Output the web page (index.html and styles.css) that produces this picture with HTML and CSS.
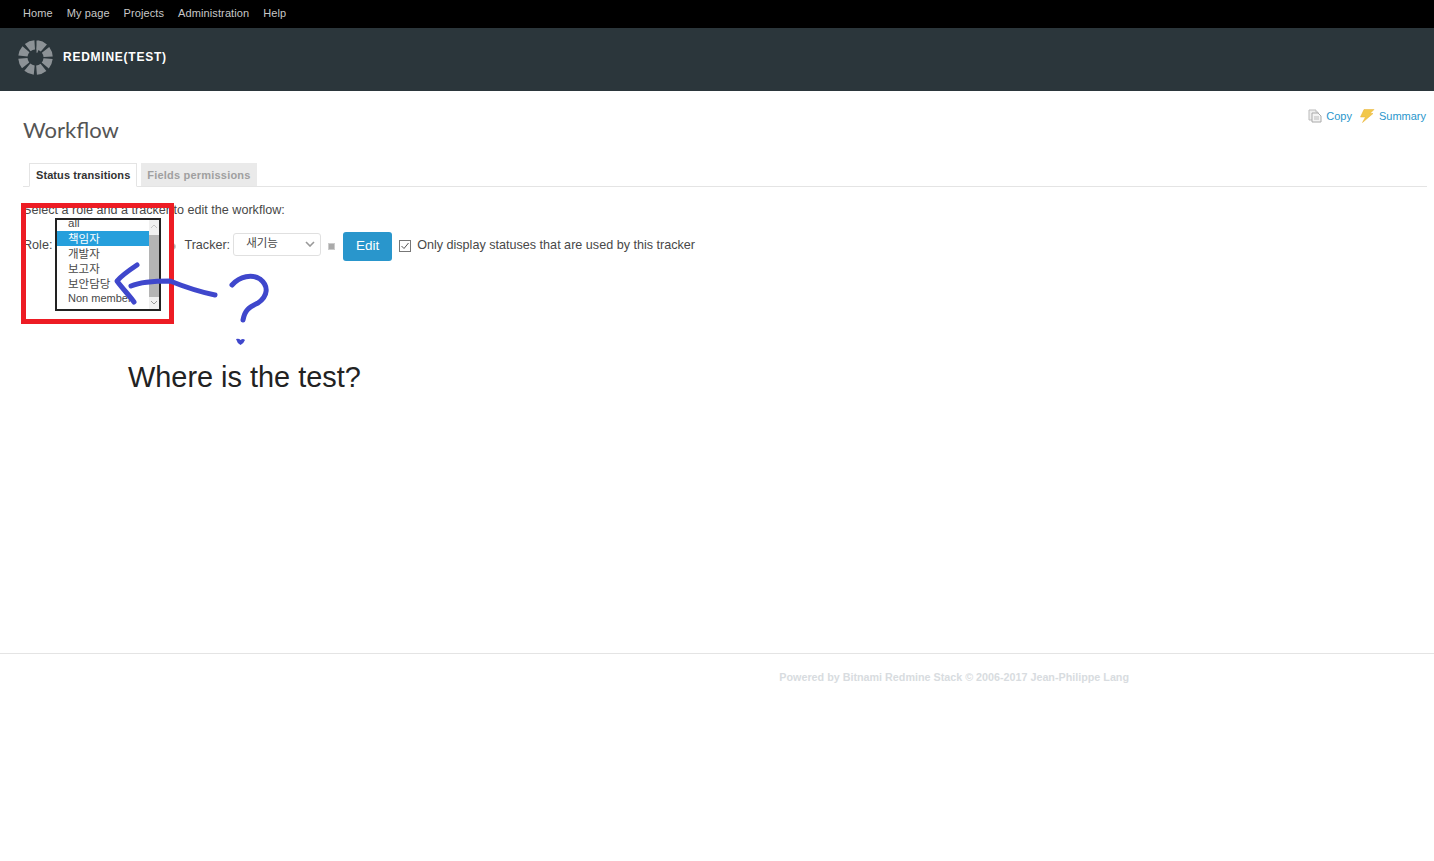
FILE: index.html
```html
<!DOCTYPE html>
<html lang="en">
<head>
  <meta charset="UTF-8" />
  <title>Workflow</title>
  <link rel="stylesheet" href="styles.css">
</head>
<body>

<div class="top-menu">
  <a href="#">Home</a>
  <a href="#">My page</a>
  <a href="#">Projects</a>
  <a href="#">Administration</a>
  <a href="#">Help</a>
</div>

<div class="header">
  <svg class="logo" width="35" height="35" viewBox="0 0 36 36">
    <circle cx="18" cy="18" r="13" fill="none" stroke="#8c9296" stroke-width="9.500" stroke-dasharray="7.710 2.500" stroke-dashoffset="-1.250"/>
    <path d="M19 0.500 L24 1.500 L20 13 L19 13Z" fill="#8c9296"/>
  </svg>
  <h1 class="site-title">REDMINE(TEST)</h1>
</div>

<div class="content">
  <div class="contextual">
    <svg width="14" height="14" viewBox="0 0 14 14">
      <path d="M1 1h7v2h2v8H1z" fill="#eee" stroke="#bbb"/>
      <path d="M4 4h6l3 3v6H4z" fill="#f4f4f4" stroke="#aaa"/>
      <path d="M6 8h5M6 10h5" stroke="#bbb"/>
    </svg>
    <a href="#">Copy</a>
    <svg width="16" height="14" viewBox="0 0 16 14">
      <path d="M5 0.500h10L11 4.500h3L3.500 13.500 6.500 8H1.500z" fill="#f2c84b" stroke="#e8b030" stroke-width="0.500"/>
    </svg>
    <a href="#">Summary</a>
  </div>

  <h2 class="page-title">Workflow</h2>

  <div class="tabs">
    <a class="tab selected" href="#">Status transitions</a>
    <a class="tab" href="#">Fields permissions</a>
  </div>

  <p class="intro">Select a role and a tracker to edit the workflow:</p>

  <form class="filter">
    <label>Role:</label>
    <span class="role-space"><span class="plus-icon round"></span></span>
    <label>Tracker:</label>
    <span class="tracker-select">
      <span class="tracker-value">새기능</span>
      <svg width="10" height="6" viewBox="0 0 10 6"><path d="M1 1l4 4 4-4" fill="none" stroke="#999" stroke-width="1.600"/></svg>
    </span>
    <span class="plus-icon"></span>
    <button type="button" class="edit-btn">Edit</button>
    <span class="check"><svg width="10" height="10" viewBox="0 0 10 10"><path d="M1.500 5l2.500 2.500 4.500-5.500" fill="none" stroke="#555"/></svg></span>
    <span>Only display statuses that are used by this tracker</span>
  </form>
</div>

<div class="footer">Powered by Bitnami Redmine Stack © 2006-2017 Jean-Philippe Lang</div>

<!-- pasted annotation on top of the page -->
<div class="red-box"></div>
<div class="role-list">
  <div class="role-items">
    <div class="role-item first">all</div>
    <div class="role-item active">책임자</div>
    <div class="role-item">개발자</div>
    <div class="role-item">보고자</div>
    <div class="role-item">보안담당</div>
    <div class="role-item last">Non member</div>
  </div>
  <div class="role-scroll">
    <svg class="scroll-arrow" width="10" height="15" viewBox="0 0 10 15"><path d="M2 8l3-3 3 3" fill="none" stroke="#c4c4c4"/></svg>
    <div class="scroll-thumb"></div>
    <svg class="scroll-arrow" width="10" height="12" viewBox="0 0 10 12"><path d="M2 4l3 3 3-3" fill="none" stroke="#999"/></svg>
  </div>
</div>
<svg class="scribble" width="300" height="360" viewBox="0 0 300 360">
  <g fill="none" stroke="#3f47cc" stroke-width="5" stroke-linecap="round" stroke-linejoin="round">
    <path d="M137 265 C128 271 122 275 117 281 C122 288 129 295 134 302"/>
    <path d="M131 286 C138 283 150 281 170 281 C185 287 200 292 215 295"/>
    <path d="M232 285 C240 276 252 274 260 279 C269 286 268 296 258 303 C250 307 245 309 243 320"/>
  </g>
  <path d="M236 339 Q239 338 240.500 340 Q243 338 245 340 Q244 343 240.500 345 Q237 343 236 339Z" fill="#3f47cc"/>
</svg>
<div class="question">Where is the test?</div>

</body>
</html>
```
FILE: styles.css
```css
html, body {
  margin: 0;
  padding: 0;
  height: 100%;
  background: #fff;
  font-family: "Liberation Sans", Arial, sans-serif;
  color: #484848;
}
a {
  text-decoration: none;
}
.top-menu {
  display: flex;
  gap: 13.800px;
  height: 28px;
  padding: 0 0 2px 23px;
  background: #000;
  align-items: center;
  box-sizing: border-box;
  font-size: 11px;
  letter-spacing: 0.120px;
}
.top-menu a {
  color: #c8c8c8;
}
.header {
  display: flex;
  align-items: center;
  height: 63px;
  padding: 0 0 5px 18px;
  background: #2b363b;
  box-sizing: border-box;
}
.logo {
  margin-right: 10px;
}
.site-title {
  margin: 0;
  font-size: 12px;
  font-weight: bold;
  letter-spacing: 0.750px;
  color: #fff;
}
.content {
  position: relative;
  height: 562px;
  padding: 0 7px 0 23px;
  box-sizing: border-box;
}
.contextual {
  position: absolute;
  top: 18px;
  right: 8px;
  display: flex;
  align-items: center;
  gap: 4px;
  font-size: 11px;
}
.contextual a {
  color: #2996cc;
  margin-right: 3px;
}
.contextual a:last-child {
  margin-right: 0;
}
.page-title {
  margin: 0;
  padding-top: 25px;
  font-family: "Lato", "Liberation Sans", sans-serif;
  font-size: 22px;
  font-weight: normal;
  line-height: 28px;
  color: #555;
}
.tabs {
  display: flex;
  gap: 4px;
  height: 23px;
  margin-top: 19px;
  padding-left: 6px;
  border-bottom: 1px solid #e4e4e4;
  font-size: 11px;
  font-weight: bold;
  letter-spacing: 0.080px;
}
.tab {
  height: 23px;
  line-height: 24px;
  padding: 0 6px;
  background: #eaeaea;
  color: #a0a0a0;
  letter-spacing: 0.200px;
}
.tab.selected {
  box-sizing: border-box;
  height: 24px;
  padding: 0 6px;
  line-height: 22px;
  background: #fff;
  color: #333;
  border: 1px solid #e4e4e4;
  border-bottom: 1px solid #fff;
  letter-spacing: 0.080px;
}
.intro {
  margin: 15px 0 0;
  font-size: 12.600px;
  line-height: 16px;
}
.filter {
  display: flex;
  align-items: center;
  height: 30px;
  margin-top: 12px;
  font-size: 12.600px;
}
.role-space {
  display: flex;
  justify-content: flex-end;
  align-items: center;
  width: 124px;
  padding-right: 8px;
}
.tracker-select {
  display: flex;
  align-items: center;
  justify-content: space-between;
  width: 88px;
  height: 23px;
  margin: -2px 0 0 3px;
  padding: 0 5px 0 12px;
  border: 1px solid #e0e0e0;
  border-radius: 3px;
  box-sizing: border-box;
  font-family: "Noto Sans CJK KR", sans-serif;
  font-size: 11.500px;
}
.tracker-value {
  margin-top: -5px;
}
.plus-icon {
  width: 5px;
  height: 5px;
  margin: 2px 0 0 7px;
  background: #aaa;
  border: 1px solid #ccc;
}
.plus-icon.round {
  border-radius: 50%;
}
.edit-btn {
  width: 49px;
  height: 29px;
  margin: 3px 0 0 8px;
  padding: 0 0 2px;
  border: none;
  border-radius: 3px;
  background: #2996cc;
  color: #fff;
  font-family: "Liberation Sans", Arial, sans-serif;
  font-size: 13.500px;
}
.check {
  display: flex;
  width: 12px;
  height: 12px;
  margin: 2px 6px 0 7px;
  border: 1px solid #777;
  box-sizing: border-box;
}
.footer {
  height: 208px;
  padding: 17px 305px 0 0;
  border-top: 1px solid #e4e4e4;
  box-sizing: border-box;
  text-align: right;
  font-size: 10.750px;
  font-weight: bold;
  color: #d8dce0;
}
.red-box {
  position: absolute;
  left: 21px;
  top: 203px;
  width: 143px;
  height: 111px;
  border: 5px solid #ed1c24;
}
.role-list {
  position: absolute;
  left: 55px;
  top: 218px;
  display: flex;
  width: 102px;
  height: 89px;
  border: 2px solid #222;
  background: #fff;
  overflow: hidden;
  font-size: 11.500px;
}
.role-items {
  flex: 1;
  font-family: "Liberation Sans", "Noto Sans CJK KR", sans-serif;
}
.role-item {
  height: 15px;
  padding-left: 11px;
  line-height: 16px;
  color: #484848;
}
.role-item.first {
  height: 11px;
  line-height: 6px;
}
.role-item.last {
  line-height: 14px;
  font-size: 11px;
}
.role-item.active {
  background: #269fdc;
  color: #fff;
}
.role-scroll {
  display: flex;
  flex-direction: column;
  width: 10px;
  background: #f0f0f0;
}
.scroll-thumb {
  flex: 1;
  background: #b4b4b4;
}
.scribble {
  position: absolute;
  left: 0;
  top: 0;
}
.question {
  position: absolute;
  left: 128px;
  top: 360px;
  font-size: 28.900px;
  line-height: 34px;
  color: #222;
}
```
